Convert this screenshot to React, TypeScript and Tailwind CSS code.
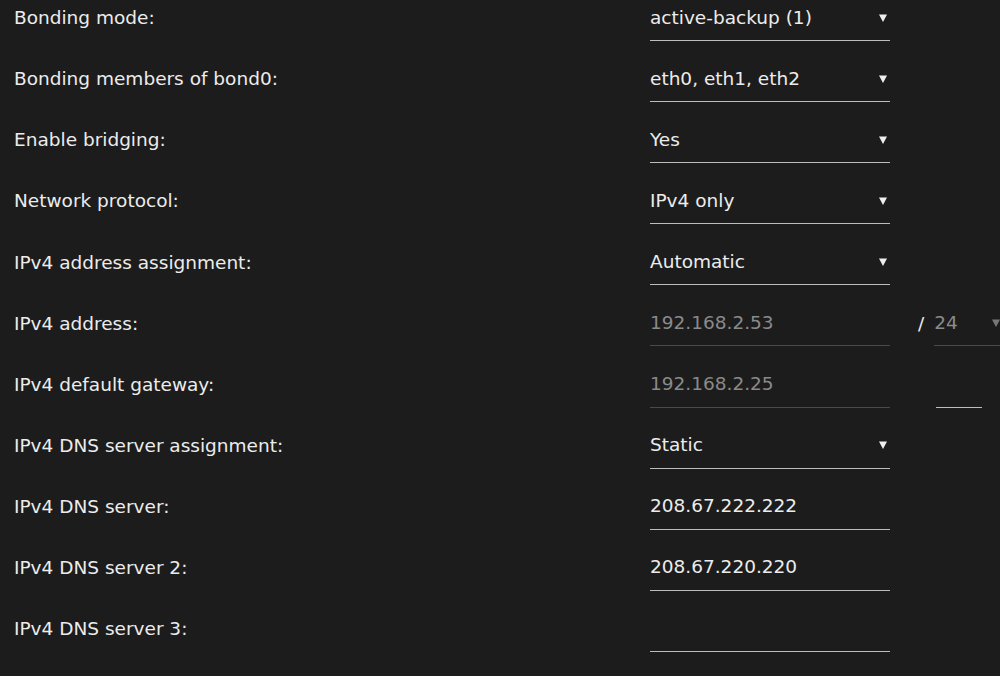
import React from "react";

type Row = {
  label: string;
  value: string;
  kind: "select" | "input";
  disabled?: boolean;
  extra?: "mask" | "short";
};

const rows: Row[] = [
  { label: "Bonding mode:", value: "active-backup (1)", kind: "select" },
  { label: "Bonding members of bond0:", value: "eth0, eth1, eth2", kind: "select" },
  { label: "Enable bridging:", value: "Yes", kind: "select" },
  { label: "Network protocol:", value: "IPv4 only", kind: "select" },
  { label: "IPv4 address assignment:", value: "Automatic", kind: "select" },
  { label: "IPv4 address:", value: "192.168.2.53", kind: "input", disabled: true, extra: "mask" },
  { label: "IPv4 default gateway:", value: "192.168.2.25", kind: "input", disabled: true, extra: "short" },
  { label: "IPv4 DNS server assignment:", value: "Static", kind: "select" },
  { label: "IPv4 DNS server:", value: "208.67.222.222", kind: "input" },
  { label: "IPv4 DNS server 2:", value: "208.67.220.220", kind: "input" },
  { label: "IPv4 DNS server 3:", value: "", kind: "input" },
];

const Arrow = ({ dim }: { dim?: boolean }) => (
  <svg width="8" height="8" viewBox="0 0 8 8" className={dim ? "text-[#777]" : "text-[#eee]"}>
    <path d="M0 0.5h8L4 8z" fill="currentColor" />
  </svg>
);

function Field({ row }: { row: Row }) {
  const line = row.disabled ? "border-[#4a4a4a]" : "border-[#bdbdbd]";
  const text = row.disabled ? "text-[#8a8a8a]" : "text-[#ececec]";
  return (
    <div className={`flex-none w-[240px] h-[41px] border-b ${line} flex items-center justify-between pb-[5px]`}>
      <span className={text}>{row.value}</span>
      {row.kind === "select" && (
        <span className="mr-[3px]">
          <Arrow />
        </span>
      )}
    </div>
  );
}

export default function App() {
  return (
    <div
      className="w-[1000px] h-[676px] overflow-hidden bg-[#1c1c1c] text-[#ececec] text-[18.5px] pl-[14px]"
      style={{ fontFamily: "'DejaVu Sans', sans-serif" }}
    >
      {rows.map((row) => (
        <div key={row.label} className="flex h-[61.1px]">
          <div className="flex-none w-[636px] h-[41px] flex items-center pb-[5px]">{row.label}</div>
          <Field row={row} />
          {row.extra === "mask" && (
            <div className="flex flex-none ml-[28px]">
              <div className="h-[41px] flex items-center pb-[5px] text-[#ececec] mr-[10px]">/</div>
              <div className="flex-none w-[80px] h-[41px] border-b border-[#4a4a4a] flex items-center justify-between pb-[5px]">
                <span className="text-[#8a8a8a]">24</span>
                <span className="mr-[14px]">
                  <Arrow dim />
                </span>
              </div>
            </div>
          )}
          {row.extra === "short" && (
            <div className="flex-none ml-[46px] w-[46px] h-[41px] border-b border-[#bdbdbd]" />
          )}
        </div>
      ))}
    </div>
  );
}
